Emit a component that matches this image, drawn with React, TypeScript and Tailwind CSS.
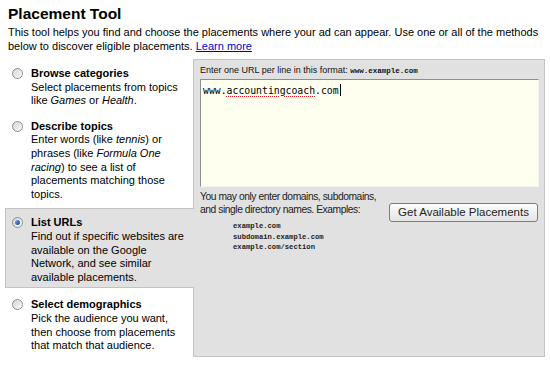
import React from 'react';

type Method = { title: string; body: React.ReactNode; selected?: boolean; gap: string };

const methods: Method[] = [
  { title: 'Browse categories', gap: 'mt-0', body: <>Select placements from topics like <i>Games</i> or <i>Health</i>.</> },
  { title: 'Describe topics', gap: 'mt-0', body: <>Enter words (like <i>tennis</i>) or phrases (like <i>Formula One racing</i>) to see a list of placements matching those topics.</> },
  { title: 'List URLs', gap: 'mt-[3px]', selected: true, body: <>Find out if specific websites are available on the Google Network, and see similar available placements.</> },
  { title: 'Select demographics', gap: 'mt-[2px]', body: <>Pick the audience you want, then choose from placements that match that audience.</> },
];

function Radio({ checked }: { checked?: boolean }) {
  return (
    <span className="mt-[1px] flex h-[11px] w-[11px] shrink-0 items-center justify-center rounded-full border border-[#8e8f8f] bg-linear-to-br from-[#d4d4d4] to-[#fbfbfb]">
      {checked && <span className="h-[5px] w-[5px] rounded-full bg-linear-to-br from-[#7ea2e6] to-[#1c3e9c]" />}
    </span>
  );
}

export default function App() {
  return (
    <div className="h-[366px] w-[550px] bg-white pt-[5px] font-['Liberation_Sans',Arial,sans-serif] text-black">
      <h1 className="pl-[8px] text-[15.5px] font-bold leading-[18px]">Placement Tool</h1>
      <p className="mt-[3px] w-[545px] pl-[8px] text-[11px] leading-[13.5px]">
        This tool helps you find and choose the placements where your ad can appear. Use one or all of the methods below to discover eligible placements.{' '}
        <a href="#" className="text-[#0000cc] underline">Learn more</a>
      </p>

      <div className="mt-[6px] flex">
        {/* ── method list ── */}
        <div className="ml-[5px] w-[188px] text-[11px] leading-[13.6px]">
          {methods.map((m) => (
            <div
              key={m.title}
              className={`${m.gap} flex gap-[8px] pl-[6px] pt-[7px] pb-[3px] ${m.selected ? 'relative z-10 -mr-px border-y border-l border-[#c3c3c3] bg-[#e1e1e1]' : 'border border-transparent'}`}
            >
              <Radio checked={m.selected} />
              <div className="w-[157px]">
                <div className="font-bold">{m.title}</div>
                <div>{m.body}</div>
              </div>
            </div>
          ))}
        </div>

        {/* ── URL panel ── */}
        <div className="h-[298px] w-[352px] border border-[#c3c3c3] bg-[#e1e1e1] px-[6px] pt-[5px]">
          <div className="text-[9px] leading-[11px] text-[#111]">
            Enter one URL per line in this format:{' '}
            <span className="font-['Liberation_Mono','Courier_New',monospace] text-[7.5px] font-bold">www.example.com</span>
          </div>
          <div className="mt-[2px] h-[108px] w-[339px] border border-t-[#8d8d8d] border-l-[#8d8d8d] border-r-[#f4f4f4] border-b-[#f4f4f4] bg-[#fffff0] px-[2px] pt-[2px] font-['DejaVu_Sans_Mono',monospace] text-[9.8px] leading-[14px]">
            www.<span className="underline decoration-dotted decoration-[#e02020] underline-offset-2">accountingcoach</span>.com
            <span className="ml-px inline-block h-[12px] w-px translate-y-[2px] bg-black" />
          </div>
          <div className="mt-[4px] flex items-start justify-between">
            <div>
              <div className="whitespace-nowrap text-[10.3px] leading-[12.5px] tracking-[-0.45px] text-[#222]">
                You may only enter domains, subdomains,<br />and single directory names. Examples:
              </div>
              <div className="mt-[5px] pl-[33px] font-['Liberation_Mono','Courier_New',monospace] text-[7.2px] font-bold leading-[10.5px] text-[#222]">
                <div>example.com</div>
                <div>subdomain.example.com</div>
                <div>example.com/section</div>
              </div>
            </div>
            <button className="mt-[12px] h-[19px] w-[149px] rounded-[3px] border border-[#7d7d7d] bg-linear-to-b from-[#fdfdfd] to-[#e4e4e4] text-[11.5px] leading-[17px] text-[#222]">
              Get Available Placements
            </button>
          </div>
        </div>
      </div>
    </div>
  );
}
